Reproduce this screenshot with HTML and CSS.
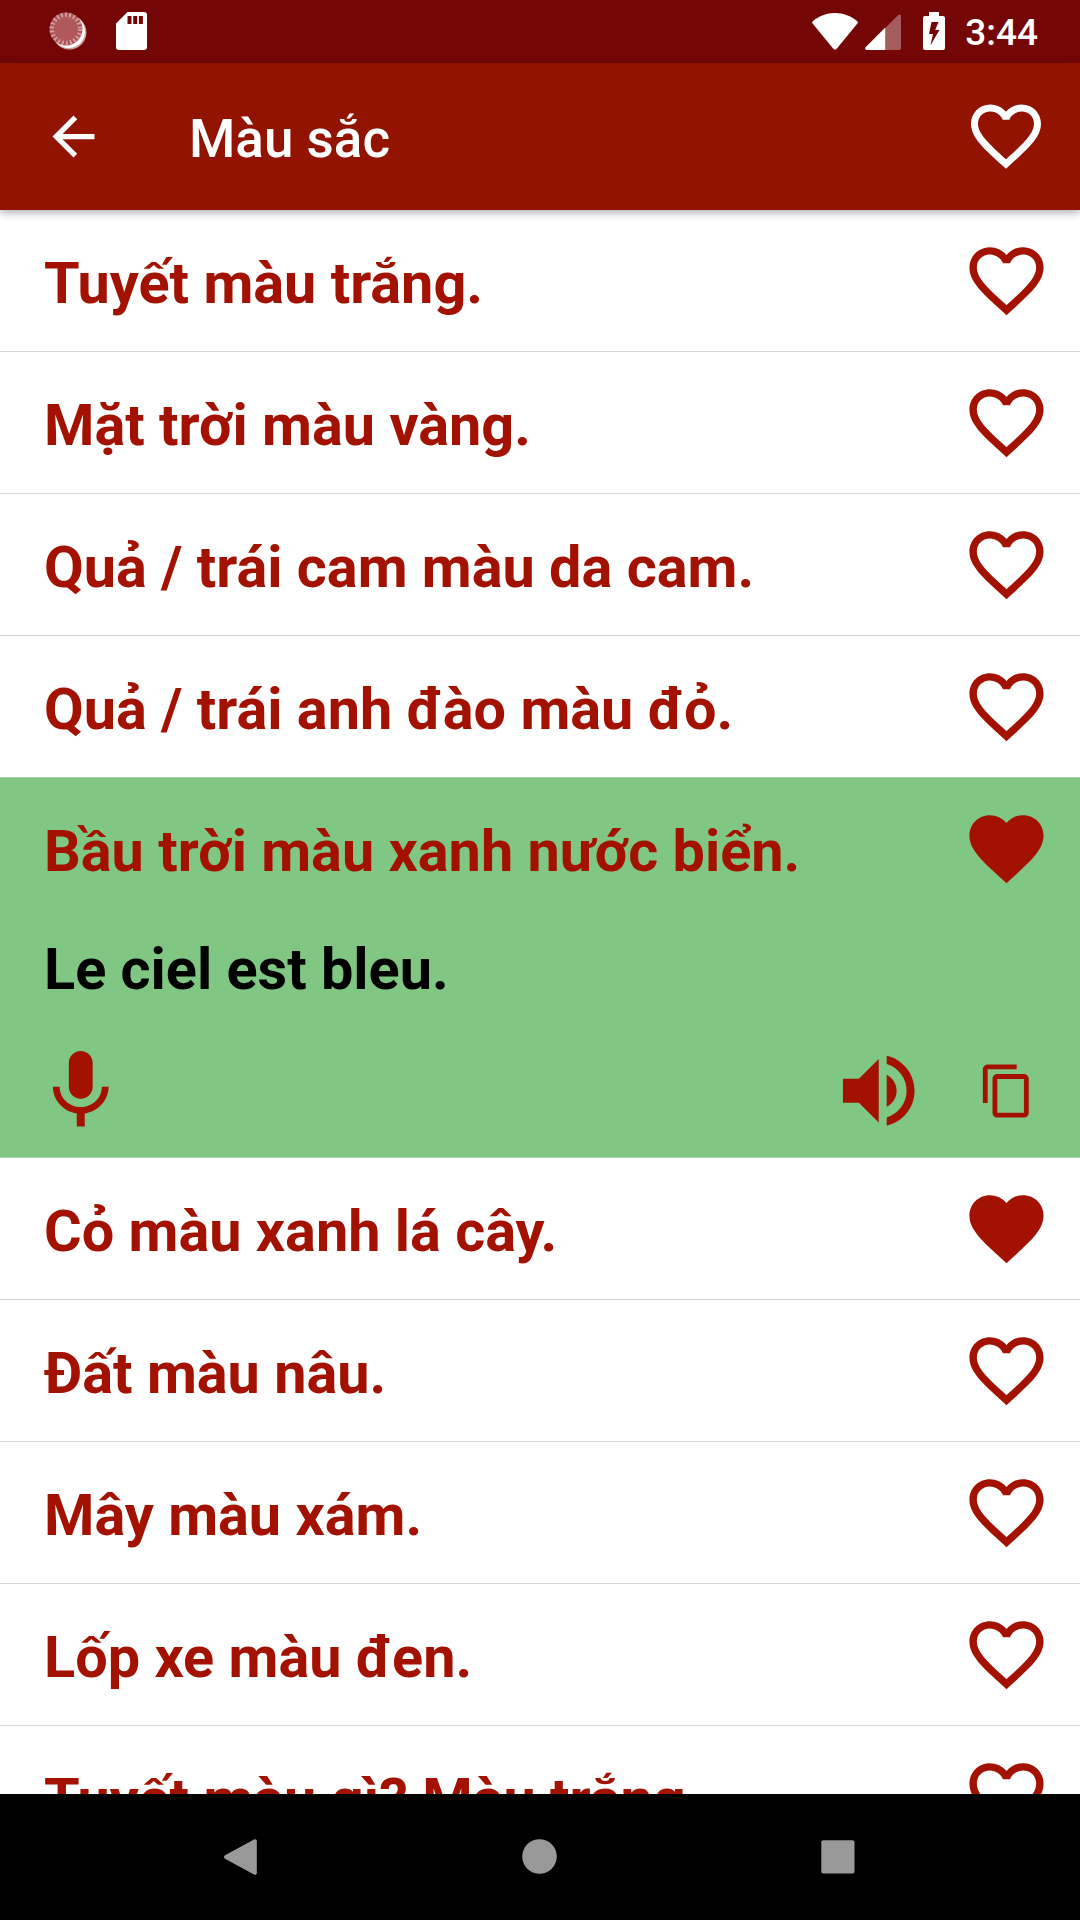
FILE: index.html
```html
<!DOCTYPE html>
<html lang="vi">
<head>
  <meta charset="UTF-8">
  <title>Màu sắc</title>
  <link rel="stylesheet" href="styles.css">
</head>
<body>
  <!-- Shared icons -->
  <svg class="icon-defs">
    <symbol id="heart-outline" viewBox="0 0 24 24">
      <path d="M16.5 3c-1.74 0-3.41.81-4.5 2.09C10.91 3.81 9.24 3 7.5 3 4.42 3 2 5.42 2 8.5c0 3.78 3.4 6.86 8.55 11.54L12 21.35l1.45-1.32C18.6 15.36 22 12.28 22 8.5 22 5.42 19.58 3 16.5 3zm-4.4 15.55l-.1.1-.1-.1C7.14 14.24 4 11.39 4 8.5 4 6.5 5.5 5 7.5 5c1.54 0 3.04.99 3.57 2.36h1.87C13.46 5.99 14.96 5 16.5 5c2 0 3.5 1.5 3.5 3.5 0 2.89-3.14 5.74-7.9 10.05z"/>
    </symbol>
    <symbol id="heart-full" viewBox="0 0 24 24">
      <path d="M12 21.35l-1.45-1.32C5.4 15.36 2 12.28 2 8.5 2 5.42 4.42 3 7.5 3c1.74 0 3.41.81 4.5 2.09C13.09 3.81 14.76 3 16.5 3 19.58 3 22 5.42 22 8.5c0 3.78-3.4 6.86-8.55 11.54L12 21.35z"/>
    </symbol>
  </svg>

  <div class="status-bar">
    <div class="status-left">
      <svg class="spinner" viewBox="0 0 38 38">
        <circle cx="20.5" cy="20.5" r="17" fill="#cfa0a0"/>
        <circle cx="19.5" cy="19.5" r="16.5" fill="#fff"/>
        <circle cx="17" cy="17" r="16.5" fill="#b0585c"/>
        <circle cx="17" cy="17" r="14.2" fill="none" stroke="#d3a3a5" stroke-width="4.5" stroke-dasharray="1.7 2.4"/>
      </svg>
      <svg class="sd-card" viewBox="0 0 31 38">
        <path fill-rule="evenodd" d="M11.5 0H28a3 3 0 0 1 3 3v32a3 3 0 0 1-3 3H3a3 3 0 0 1-3-3V11.5zM11.5 4v8h4V4zm5.7 0v8h4V4zm5.7 0v8h4V4z"/>
      </svg>
    </div>
    <div class="status-right">
      <svg class="wifi" viewBox="0 0 46 37">
        <path d="M.8 8.2C7 3 14.5 0 23 0s16 3 22.2 8.2c.8.7.8 1.6.2 2.3L24.7 35.7c-1 1.2-2.4 1.2-3.4 0L.6 10.5C0 9.8 0 8.9.8 8.2z"/>
      </svg>
      <svg class="signal" viewBox="0 0 36 36">
        <path d="M20.3 14L33 1.2c1.4-1.4 3-.8 3 1V34a2 2 0 0 1-2 2H20.3z" opacity=".35"/>
        <path d="M20.3 13.5V36H2c-1.900 0-2.600-1.700-1.200-3z"/>
      </svg>
      <svg class="battery" viewBox="0 0 22 38">
        <path fill-rule="evenodd" d="M6 0h10v4h4a2 2 0 0 1 2 2v30a2 2 0 0 1-2 2H2a2 2 0 0 1-2-2V6a2 2 0 0 1 2-2h4zM8.5 10L6 22h4l-2.6 11.5L16.5 18h-4.3l3.3-8z"/>
      </svg>
      <span class="clock">3:44</span>
    </div>
  </div>

  <div class="app-bar">
    <svg class="back" viewBox="0 0 24 24">
      <path d="M20 11H7.83l5.59-5.59L12 4l-8 8 8 8 1.41-1.41L7.83 13H20v-2z"/>
    </svg>
    <h1>Màu sắc</h1>
    <svg class="bar-heart"><use href="#heart-outline"/></svg>
  </div>

  <div class="list">
    <div class="item">
      <div class="row"><p>Tuyết màu trắng.</p><svg class="heart"><use href="#heart-outline"/></svg></div>
    </div>
    <div class="item">
      <div class="row"><p>Mặt trời màu vàng.</p><svg class="heart"><use href="#heart-outline"/></svg></div>
    </div>
    <div class="item">
      <div class="row"><p>Quả / trái cam màu da cam.</p><svg class="heart"><use href="#heart-outline"/></svg></div>
    </div>
    <div class="item before-open">
      <div class="row"><p>Quả / trái anh đào màu đỏ.</p><svg class="heart"><use href="#heart-outline"/></svg></div>
    </div>

    <!-- Opened phrase -->
    <div class="item open">
      <div class="row"><p>Bầu trời màu xanh nước biển.</p><svg class="heart"><use href="#heart-full"/></svg></div>
      <p class="translation">Le ciel est bleu.</p>
      <div class="actions">
        <svg class="mic" viewBox="0 0 24 24">
          <path d="M12 14c1.66 0 2.99-1.34 2.99-3L15 5c0-1.66-1.34-3-3-3S9 3.34 9 5v6c0 1.66 1.34 3 3 3zm5.3-3c0 3-2.54 5.1-5.3 5.1S6.7 14 6.7 11H5c0 3.41 2.72 6.23 6 6.72V21h2v-3.28c3.28-.48 6-3.3 6-6.72h-1.7z"/>
        </svg>
        <svg class="speaker" viewBox="0 0 24 24">
          <path d="M3 9v6h4l5 5V4L7 9H3zm13.5 3c0-1.77-1.02-3.29-2.5-4.03v8.05c1.48-.73 2.5-2.25 2.5-4.02zM14 3.23v2.06c2.89.86 5 3.54 5 6.71s-2.11 5.85-5 6.71v2.06c4.01-.91 7-4.49 7-8.77s-2.99-7.86-7-8.77z"/>
        </svg>
        <svg class="copy" viewBox="0 0 24 24">
          <path d="M16 1H4c-1.1 0-2 .9-2 2v14h2V3h12V1zm3 4H8c-1.1 0-2 .9-2 2v14c0 1.1.9 2 2 2h11c1.1 0 2-.9 2-2V7c0-1.1-.9-2-2-2zm0 16H8V7h11v14z"/>
        </svg>
      </div>
    </div>

    <div class="item">
      <div class="row"><p>Cỏ màu xanh lá cây.</p><svg class="heart"><use href="#heart-full"/></svg></div>
    </div>
    <div class="item">
      <div class="row"><p>Đất màu nâu.</p><svg class="heart"><use href="#heart-outline"/></svg></div>
    </div>
    <div class="item">
      <div class="row"><p>Mây màu xám.</p><svg class="heart"><use href="#heart-outline"/></svg></div>
    </div>
    <div class="item">
      <div class="row"><p>Lốp xe màu đen.</p><svg class="heart"><use href="#heart-outline"/></svg></div>
    </div>
    <div class="item">
      <div class="row"><p>Tuyết màu gì? Màu trắng.</p><svg class="heart"><use href="#heart-outline"/></svg></div>
    </div>
  </div>

  <div class="nav-bar">
    <svg class="nav-icon" viewBox="0 0 36 36">
      <path d="M1 16.3L30 .5c1.7-.9 2.8 0 2.8 1.500v32c0 1.500-1.100 2.400-2.800 1.500L1 19.700c-1.300-.8-1.300-2.600 0-3.400z"/>
    </svg>
    <svg class="nav-icon" viewBox="0 0 36 36"><circle cx="17.5" cy="17.5" r="17.3"/></svg>
    <svg class="nav-icon" viewBox="0 0 36 36"><rect x="1.3" y="1.3" width="33.2" height="33.2" rx="2"/></svg>
  </div>
</body>
</html>
```
FILE: styles.css
```css
* {
  box-sizing: border-box;
}

body {
  margin: 0;
  width: 1080px;
  height: 1920px;
  display: flex;
  flex-direction: column;
  overflow: hidden;
  background-color: #fff;
  font-family: Roboto, sans-serif;
}

h1,
p {
  margin: 0;
}

svg {
  flex-shrink: 0;
  fill: currentColor;
}

.icon-defs {
  display: none;
}

/* Status bar */
.status-bar {
  height: 63px;
  flex-shrink: 0;
  display: flex;
  justify-content: space-between;
  padding: 12px 42px 0 49px;
  background-color: #750606;
  color: #fff;
}

.status-left,
.status-right {
  display: flex;
  align-items: flex-start;
}

.spinner {
  width: 38px;
  height: 38px;
  margin-right: 29px;
}

.sd-card {
  width: 31px;
  height: 38px;
}

.wifi {
  width: 46px;
  height: 37px;
  margin: 1px 7px 0 0;
}

.signal {
  width: 36px;
  height: 36px;
  margin: 2px 22px 0 0;
}

.battery {
  width: 22px;
  height: 38px;
  margin-right: 20px;
}

.clock {
  font-size: 37px;
  font-weight: 500;
  line-height: 42px;
}

/* App bar */
.app-bar {
  height: 147px;
  flex-shrink: 0;
  display: flex;
  align-items: center;
  padding: 0 32px 0 42px;
  background-color: #921300;
  color: #fff;
  box-shadow: 0 2px 9px rgba(30, 25, 50, 0.4);
  z-index: 1;
}

.back {
  width: 63px;
  height: 63px;
}

h1 {
  flex: 1;
  margin-left: 84px;
  font-size: 53px;
  font-weight: 500;
  line-height: 62px;
  padding-top: 5px;
}

.bar-heart {
  width: 84px;
  height: 84px;
  margin-bottom: 2px;
}

/* Phrases */
.list {
  flex: 1;
  min-height: 0;
  overflow: hidden;
  color: #a31200;
}

.item {
  border-bottom: 1px solid #d6d6d6;
}

.before-open,
.open {
  border-bottom-color: #a7cfaa;
}

.row {
  height: 141px;
  display: flex;
  align-items: center;
  justify-content: space-between;
  padding: 0 29px 0 44px;
}

.row p,
.translation {
  font-size: 57.6px;
  font-weight: 700;
  line-height: 68px;
}

.row p {
  padding-top: 7px;
}

.heart {
  width: 89px;
  height: 89px;
}

.open {
  background-color: #81c784;
}

.translation {
  color: #000;
  padding: 17px 44px 0;
}

.actions {
  height: 153px;
  display: flex;
  align-items: center;
  padding: 21px 44px 0 33px;
}

.mic,
.speaker {
  width: 95.5px;
  height: 95.5px;
}

.speaker {
  margin-left: auto;
  margin-right: 52px;
}

.copy {
  width: 58px;
  height: 58px;
}

/* Navigation bar */
.nav-bar {
  height: 126px;
  flex-shrink: 0;
  display: flex;
  justify-content: center;
  gap: 262px;
  padding-top: 45px;
  background-color: #000;
  color: #999;
}

.nav-icon {
  width: 36px;
  height: 36px;
}
```
